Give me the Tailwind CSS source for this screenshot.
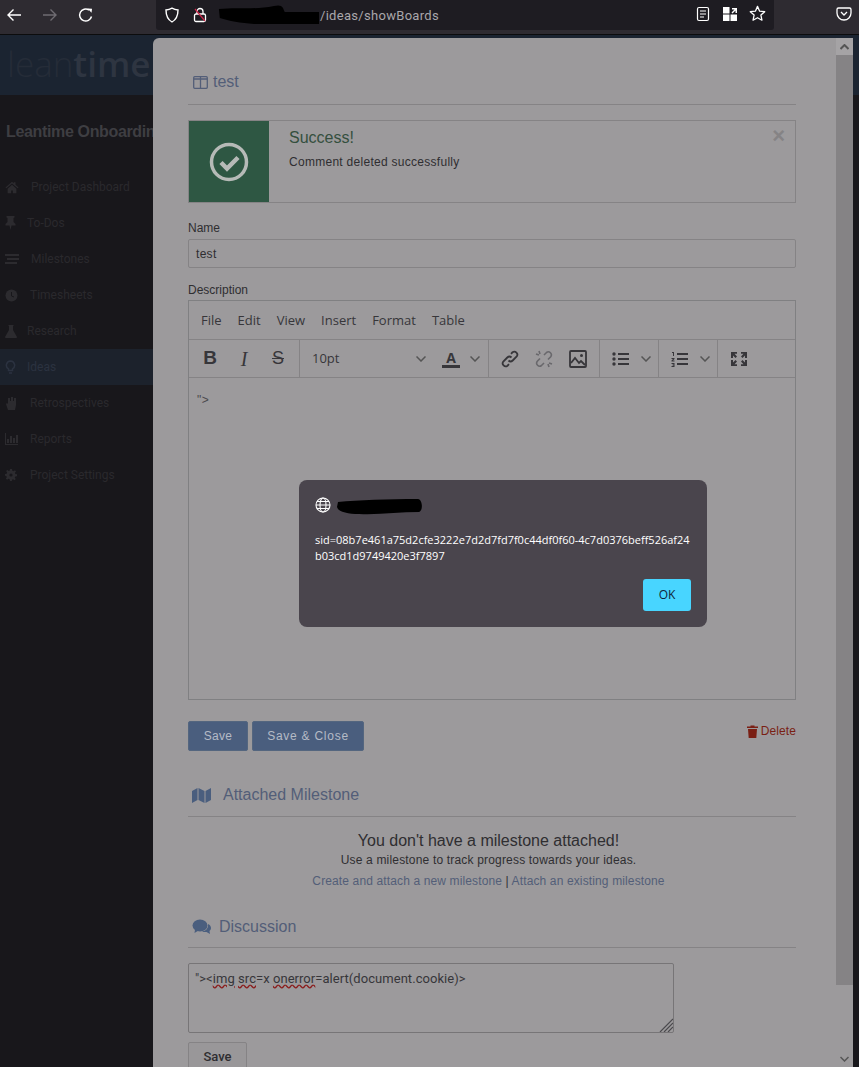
<!DOCTYPE html>
<html lang="en">
<head>
    <meta charset="UTF-8">
    <title>Leantime - Ideas</title>
    <script src="https://cdn.jsdelivr.net/npm/@tailwindcss/browser@4"></script>
</head>
<body class="relative w-[859px] h-[1067px] overflow-hidden bg-[#18171b] font-['Liberation_Sans',sans-serif]">

    <!-- Browser toolbar -->
    <div class="relative flex h-[35px] bg-[#2e2b31] border-b border-[#0c0c0d]">
        <div class="flex items-center w-[156px] h-[30px] text-white">
            <svg class="ml-[6px] w-4 h-4" viewBox="0 0 16 16" fill="none" stroke="currentColor" stroke-width="1.4"><path d="M15 8H2M7.5 2.5 2 8l5.500 5.500"/></svg>
            <svg class="ml-[20px] w-4 h-4 text-[#6f6c72]" viewBox="0 0 16 16" fill="none" stroke="currentColor" stroke-width="1.4"><path d="M1 8h13M8.500 2.500 14 8l-5.500 5.500"/></svg>
            <svg class="ml-[20px] w-4 h-4" viewBox="0 0 16 16" fill="none" stroke="currentColor" stroke-width="1.5"><path d="M13.500 9.500A6 6 0 1 1 11 3"/><path d="M9.500 1.500 14 1.800l-.5 4z" fill="currentColor" stroke="none"/></svg>
        </div>
        <div class="relative flex items-center w-[618px] h-[30px] bg-[#1e1c22] rounded-b-[3px]">
            <svg class="ml-[8px] w-4 h-4 text-white" viewBox="0 0 16 16" fill="none" stroke="currentColor" stroke-width="1.4"><path d="M8 1.200c2 1.200 4 1.700 6 1.800 0 6-1.500 9.500-6 12-4.500-2.500-6-6-6-12 2-.1 4-.6 6-1.800z"/></svg>
            <svg class="ml-[12px] w-4 h-4" viewBox="0 0 16 16" fill="none"><rect x="2.500" y="7" width="11" height="7.500" rx="1.500" stroke="#fff" stroke-width="1.300"/><path d="M5 7V4.500a3 3 0 0 1 6 0V7" stroke="#fff" stroke-width="1.300"/><path d="M3 2l10 12" stroke="#c9264a" stroke-width="1.200"/></svg>
            <span class="ml-[112px] pt-[1px] text-[13px] tracking-[0.3px] text-[#a9a7ab] font-['Roboto',sans-serif]">/ideas/showBoards</span>
            <svg class="absolute left-[62px] top-[1px] w-[101px] h-[24px]" viewBox="0 0 112 24" preserveAspectRatio="none"><path d="M1 8C20 6 40 9 62 5c10-2 10 2 12 6h38v12H40C25 22 12 20 2 17z" fill="#000"/></svg>
            <svg class="absolute left-[539px] top-[6px] w-4 h-4 text-white" viewBox="0 0 16 16" fill="none" stroke="currentColor" stroke-width="1.200"><rect x="2.500" y="1.500" width="11" height="13" rx="1.500"/><path d="M5 5h6M5 8h6M5 11h4"/></svg>
            <svg class="absolute left-[566px] top-[6px] w-4 h-4" viewBox="0 0 16 16" fill="#fff"><rect x="1" y="1" width="6.500" height="6.500"/><rect x="1" y="8.500" width="6.500" height="6.500"/><rect x="8.500" y="8.500" width="6.500" height="6.500"/><path d="M10 2h5v5h-1.500V4.500L10.500 7.500 9.500 6.500 12.500 3.500H10z"/></svg>
            <svg class="absolute left-[593px] top-[5px] w-[17px] h-[17px] text-white" viewBox="0 0 16 16" fill="none" stroke="currentColor" stroke-width="1.200"><path d="M8 1.300l2 4.500 4.800.5-3.600 3.200 1 4.800L8 12l-4.200 2.300 1-4.800L1.200 6.300 6 5.800z" stroke-linejoin="round"/></svg>
        </div>
        <svg class="ml-[62px] mt-[6px] w-4 h-4 text-white" viewBox="0 0 16 16" fill="none" stroke="currentColor" stroke-width="1.300"><path d="M2.500 2h11A1.500 1.500 0 0 1 15 3.500V7a7 7 0 0 1-14 0V3.500A1.500 1.500 0 0 1 2.500 2z"/><path d="M5 6l3 3 3-3"/></svg>
    </div>

    <!-- Dimmed app behind the modal -->
    <div class="h-[60px] bg-[#1b2431] overflow-hidden">
        <div class="pl-[7px] pt-[7px] text-[35px] leading-[44px] font-['Open_Sans',sans-serif] whitespace-nowrap"><span class="font-light text-[#252c38]">lean</span><span class="font-semibold text-[#2e3541]">time</span></div>
    </div>
    <div class="w-[153px] overflow-hidden">
        <div class="pl-[6px] pt-[27px] h-[74px] text-[16px] leading-[19px] font-bold tracking-[-0.35px] text-[#3e3e42] whitespace-nowrap">Leantime Onboarding</div>
        <nav class="text-[12px] text-[#2a292d] font-['Roboto',sans-serif]">
            <div class="flex items-center h-[36px] pl-[5px]"><svg class="w-[14px] h-[14px] text-[#2c2b2f]" viewBox="0 0 16 16" fill="currentColor"><path d="M8 2 .5 8.500l1 1L8 4l6.500 5.500 1-1L12 5.500V2.500h-2v1.300zM3 10v5h4v-3h2v3h4v-5L8 5.500z"/></svg><span class="ml-[12px]">Project Dashboard</span></div>
            <div class="flex items-center h-[36px] pl-[5px]"><svg class="w-[11px] h-[14px] text-[#2c2b2f]" viewBox="0 0 11 14" fill="currentColor"><path d="M1.500 0h8v1.500L8.500 2v4l2 2v1.500H6.500L5.500 14l-1-4.500H.5V8l2-2V2l-1-.5z"/></svg><span class="ml-[11px]">To-Dos</span></div>
            <div class="flex items-center h-[36px] pl-[5px]"><svg class="w-[14px] h-[12px] text-[#2c2b2f]" viewBox="0 0 14 12" fill="currentColor"><path d="M0 1h14v2H0zM2 5h12v2H2zM0 9h12v2H0z"/></svg><span class="ml-[12px]">Milestones</span></div>
            <div class="flex items-center h-[36px] pl-[5px]"><svg class="w-[13px] h-[13px] text-[#2c2b2f]" viewBox="0 0 13 13"><circle cx="6.500" cy="6.500" r="6" fill="currentColor"/><path d="M6.500 3v4l2.500 1" stroke="#18171b" fill="none"/></svg><span class="ml-[12px]">Timesheets</span></div>
            <div class="flex items-center h-[36px] pl-[5px]"><svg class="w-[12px] h-[13px] text-[#2c2b2f]" viewBox="0 0 12 13" fill="currentColor"><path d="M3.500 0h5v1H8v4l4 7-.5 1H.5L0 12l4-7V1h-.5z"/></svg><span class="ml-[10px]">Research</span></div>
            <div class="flex items-center h-[36px] pl-[5px] bg-[#1c222c] text-[#2b3240]"><svg class="w-[11px] h-[14px] text-[#2b3240]" viewBox="0 0 11 14" fill="none" stroke="currentColor" stroke-width="1.500"><path d="M5.500 1A4.300 4.300 0 0 1 7.500 9v1.500h-4V9A4.300 4.300 0 0 1 5.500 1zM4 13h3"/></svg><span class="ml-[11px]">Ideas</span></div>
            <div class="flex items-center h-[36px] pl-[5px]"><svg class="w-[13px] h-[13px] text-[#2c2b2f]" viewBox="0 0 13 13" fill="currentColor"><path d="M3 1h2v3h1V0h2v4h1V1h2v7l-1 5H3L1 7l1-1 1 1z"/></svg><span class="ml-[12px]">Retrospectives</span></div>
            <div class="flex items-center h-[36px] pl-[5px]"><svg class="w-[13px] h-[12px] text-[#2c2b2f]" viewBox="0 0 13 12" fill="currentColor"><path d="M0 0h1v11h12v1H0zM2 6h2v4H2zM5 3h2v7H5zM8 5h2v5H8zM11 2h2v8h-2z"/></svg><span class="ml-[12px]">Reports</span></div>
            <div class="flex items-center h-[36px] pl-[5px]"><svg class="w-[12px] h-[12px] text-[#2c2b2f]" viewBox="0 0 12 12" fill="currentColor"><path d="M5 0h2l.3 1.700 1.300.5L10 1.200 11 2.500 9.900 3.800l.4 1.300L12 5.300v1.900l-1.700.3-.5 1.200 1 1.400-1.300 1.200-1.400-1-1.200.5L7 12H5l-.3-1.700-1.200-.5-1.400 1L.8 9.600l1-1.400-.5-1.200L0 6.800V5l1.700-.3.4-1.200-1-1.400L2.400.9l1.400 1 1-.4z"/><circle cx="6" cy="6" r="1.600" fill="#18171b"/></svg><span class="ml-[13px]">Project Settings</span></div>
        </nav>
    </div>

    <!-- Modal window -->
    <div class="absolute left-[153px] top-[38px] flex w-[700px] h-[1029px] bg-[#9c9a9c] rounded-tl-[6px] overflow-hidden">
        <div class="w-[683px] pl-[35px] pr-[40px] pt-[34px] text-[12px] text-[#2f2e31]">

            <div class="flex items-center h-[20px] text-[16px] text-[#535e78]">
                <svg class="ml-[5px] mr-[5px] w-[15px] h-[13px]" viewBox="0 0 15 13" fill="none" stroke="currentColor" stroke-width="1.300"><rect x=".7" y=".7" width="13.600" height="11.600" rx="1"/><path d="M7.500 1v11M1 3h13" /></svg>test
            </div>
            <div class="mt-[12px] border-t border-[#858385]"></div>

            <!-- Success notice -->
            <div class="relative flex mt-[15px] h-[83px] border border-[#858385]">
                <div class="flex items-center justify-center w-[80px] bg-[#2e5743]">
                    <svg class="w-[40px] h-[40px]" viewBox="0 0 40 40" fill="none" stroke="#b6bab7"><circle cx="20" cy="20" r="17.500" stroke-width="3.500"/><path d="M12 20.500l6 6 11-11" stroke-width="4.500"/></svg>
                </div>
                <div class="pl-[20px] pt-[8px]">
                    <div class="text-[16px] leading-[18px] text-[#344f3e]">Success!</div>
                    <div class="mt-[7px] leading-[16px] tracking-[0.28px]">Comment deleted successfully</div>
                </div>
                <span class="absolute right-[10px] top-[4px] text-[22px] leading-[22px] font-bold text-[#858385]">×</span>
            </div>

            <div class="mt-[17px] leading-[16px]">Name</div>
            <div class="mt-[3px] flex items-center h-[29px] px-[7px] border border-[#858385] rounded-[2px] tracking-[0.3px]">test</div>

            <div class="mt-[14px] leading-[16px]">Description</div>

            <!-- Rich text editor -->
            <div class="mt-[2px] h-[400px] border border-[#808082] font-['Open_Sans',sans-serif] text-[#37363a]">
                <div class="flex items-center gap-[16px] h-[38px] pl-[12px] pt-[1px] text-[13px]">
                    <span>File</span><span>Edit</span><span>View</span><span>Insert</span><span>Format</span><span>Table</span>
                </div>
                <div class="flex h-[39px] border-y border-[#858385]">
                    <div class="flex items-center w-[111px] pl-[4px] border-r border-[#858385]">
                        <span class="w-[34px] text-center text-[19px] font-bold font-['Liberation_Sans',sans-serif]">B</span>
                        <span class="w-[34px] text-center text-[20px] italic font-['Liberation_Serif',serif]">I</span>
                        <span class="w-[34px] text-center text-[18px] line-through font-['Liberation_Sans',sans-serif]">S</span>
                    </div>
                    <div class="flex items-center w-[189px] border-r border-[#858385]">
                        <span class="ml-[12px] pt-[1px] w-[104px] text-[13px]">10pt</span>
                        <svg class="w-[10px] h-[6px]" viewBox="0 0 10 6" fill="none" stroke="#555" stroke-width="1.500"><path d="M.5.500 5 5 9.500.500"/></svg>
                        <span class="ml-[16px] w-[18px] text-center text-[14px] leading-[15px] font-bold border-b-[3px] border-[#37363a]">A</span>
                        <svg class="ml-[10px] w-[10px] h-[6px]" viewBox="0 0 10 6" fill="none" stroke="#555" stroke-width="1.500"><path d="M.5.500 5 5 9.500.500"/></svg>
                    </div>
                    <div class="flex items-center w-[111px] pl-[12px] gap-[16px] border-r border-[#858385]">
                        <svg class="w-[18px] h-[18px]" viewBox="0 0 18 18" fill="none" stroke="#37363a" stroke-width="1.800"><path d="M7.500 10.500a3 3 0 0 0 4.200 0l4-4a3 3 0 0 0-4.200-4.200L10 3.800"/><path d="M10.500 7.500a3 3 0 0 0-4.200 0l-4 4a3 3 0 0 0 4.200 4.200L8 14.200"/></svg>
                        <svg class="w-[18px] h-[18px]" viewBox="0 0 18 18" fill="none" stroke="#69686c" stroke-width="1.600"><path d="M9 5l2.500-2.500a3 3 0 0 1 4.200 4.200L13 9.500M9 13l-2.500 2.500a3 3 0 0 1-4.200-4.200L5 8.500M4 1l1 3M1 4l3 1M14 17l-1-3M17 14l-3-1"/></svg>
                        <svg class="w-[18px] h-[18px]" viewBox="0 0 18 18" fill="none" stroke="#37363a" stroke-width="1.800"><rect x="1" y="1" width="16" height="16" rx="1"/><circle cx="12.500" cy="5.500" r="1.500" fill="#37363a" stroke="none"/><path d="M2 13l4-5 4 5 2-2 4 4"/></svg>
                    </div>
                    <div class="flex items-center w-[59px] pl-[12px] border-r border-[#858385]">
                        <svg class="w-[17px] h-[14px]" viewBox="0 0 17 14" fill="#37363a"><circle cx="2" cy="2" r="1.700"/><circle cx="2" cy="7" r="1.700"/><circle cx="2" cy="12" r="1.700"/><path d="M6 1h11v2H6zM6 6h11v2H6zM6 11h11v2H6z"/></svg>
                        <svg class="ml-[12px] w-[10px] h-[6px]" viewBox="0 0 10 6" fill="none" stroke="#555" stroke-width="1.500"><path d="M.5.500 5 5 9.500.500"/></svg>
                    </div>
                    <div class="flex items-center w-[59px] pl-[12px] border-r border-[#858385]">
                        <svg class="w-[17px] h-[16px]" viewBox="0 0 17 16" fill="#37363a"><path d="M6 2h11v2H6zM6 7h11v2H6zM6 12h11v2H6zM1 1h2v4H2V2H1zM.5 7h3v1L2 9.500h1.500v1H.5v-1L2 8H.5zM.5 12h3v4h-3v-1h2v-.5h-1v-1h1V13h-2z"/></svg>
                        <svg class="ml-[12px] w-[10px] h-[6px]" viewBox="0 0 10 6" fill="none" stroke="#555" stroke-width="1.500"><path d="M.5.500 5 5 9.500.500"/></svg>
                    </div>
                    <div class="flex items-center pl-[13px]">
                        <svg class="w-[16px] h-[14px]" viewBox="0 0 16 14" fill="#37363a"><path d="M0 0h6v1.800H3.500L6 4.500 4.500 6 2 3.500V6H0zM10 0h6v6h-2V3.500L11.500 6 10 4.500l2.500-2.700H10zM0 8h2v2.500L4.500 8 6 9.500l-2.500 2.700H6V14H0zM14 8h2v6h-6v-1.800h2.500L10 9.500 11.500 8l2.500 2.500z"/></svg>
                    </div>
                </div>
                <div class="pl-[8px] pt-[14px] text-[12px] leading-[16px] tracking-[0.5px] font-['Liberation_Sans',sans-serif] text-[#4a494d]">"&gt;</div>
            </div>

            <!-- Form actions -->
            <div class="mt-[21px] flex items-start h-[30px]">
                <button class="h-[30px] w-[60px] bg-[#4a5e7e] border border-[#54667f] rounded-[2px] text-[#b5bbc6] tracking-[0.3px]">Save</button>
                <button class="ml-[4px] h-[30px] w-[112px] bg-[#4a5e7e] border border-[#54667f] rounded-[2px] text-[#b5bbc6] tracking-[0.75px]">Save &amp; Close</button>
                <span class="ml-auto mt-[3px] flex items-center leading-[14px] tracking-[0.1px] text-[#7a1f14]">
                    <svg class="mr-[3px] w-[11px] h-[13px]" viewBox="0 0 11 13" fill="currentColor"><path d="M0 1.500h3.500V.5h4v1H11v1.500H0zM1 4h9l-.7 9H1.700z"/></svg>Delete
                </span>
            </div>

            <!-- Attached milestone -->
            <div class="mt-[34px] flex items-center h-[20px] text-[16px] text-[#535e78]">
                <svg class="ml-[4px] w-[19px] h-[15px] text-[#4a5e7e]" viewBox="0 0 19 15" fill="currentColor"><path d="M0 3l5.500-3v12L0 15zM6.500 0l6 3v12l-6-3zM13.500 3 19 0v12l-5.500 3z"/></svg>
                <span class="ml-[12px]">Attached Milestone</span>
            </div>
            <div class="mt-[11px] border-t border-[#858385]"></div>
            <div class="text-center pr-[7px]">
                <div class="mt-[15px] text-[16px] leading-[18px]">You don't have a milestone attached!</div>
                <div class="mt-[2px] leading-[16px] tracking-[0.18px]">Use a milestone to track progress towards your ideas.</div>
                <div class="mt-[5px] leading-[16px] tracking-[0.13px] text-[#535e78]">Create and attach a new milestone <span class="text-[#2f2e31]">|</span> Attach an existing milestone</div>
            </div>

            <!-- Discussion -->
            <div class="mt-[28px] flex items-center h-[20px] text-[16px] text-[#535e78]">
                <svg class="ml-[4px] w-[19px] h-[16px] text-[#4a5e7e]" viewBox="0 0 19 16" fill="currentColor"><ellipse cx="8" cy="6.500" rx="7.500" ry="6"/><path d="M3 10.500 2.500 14l4-2.500zM16 5c2 1 3 2.500 3 4 0 1.500-1 2.500-1.500 3l.5 3-3.500-2c-1.500.2-3 0-4.500-.8 4 0 6.500-3 6-7.200z"/></svg>
                <span class="ml-[8px]">Discussion</span>
            </div>
            <div class="mt-[10px] border-t border-[#858385]"></div>
            <div class="relative mt-[15px] w-[486px] h-[70px] border border-[#777577] rounded-[2px] pl-[6px] pt-[7px] font-['Roboto',sans-serif] text-[13px] leading-[16px] tracking-[0.05px] text-[#37363a]">
                "&gt;&lt;<span class="underline decoration-wavy decoration-[#8a1c1c]">img</span> <span class="underline decoration-wavy decoration-[#8a1c1c]">src</span>=x <span class="underline decoration-wavy decoration-[#8a1c1c]">onerror</span>=alert(document.cookie)&gt;
                <svg class="absolute right-0 bottom-0 w-[14px] h-[14px]" viewBox="0 0 14 14" stroke="#4a494d" stroke-width="1.200"><path d="M1 14 14 1M5 14l9-9M9 14l5-5"/></svg>
            </div>
            <button class="mt-[9px] w-[59px] h-[30px] bg-[#999799] border border-[#858385] rounded-[2px] text-[13px] text-[#2f2e31] font-['Roboto',sans-serif] font-medium">Save</button>
        </div>

        <!-- Scrollbar -->
        <div class="flex flex-col w-[17px] bg-[#9c9a9c]">
            <div class="flex items-center justify-center h-[17px] bg-[#a5a3a5]">
                <svg class="w-[9px] h-[6px]" viewBox="0 0 9 6" fill="none" stroke="#555" stroke-width="2"><path d="M.5 5 4.500 1l4 4"/></svg>
            </div>
            <div class="h-[930px] bg-[#858385]"></div>
            <div class="flex-1"></div>
            <div class="flex items-center justify-center h-[17px]">
                <svg class="w-[9px] h-[6px]" viewBox="0 0 9 6" fill="none" stroke="#555" stroke-width="1.500"><path d="M.5 1 4.500 5l4-4"/></svg>
            </div>
        </div>
    </div>

    <!-- Browser alert dialog -->
    <div class="absolute left-[299px] top-[480px] w-[408px] h-[147px] bg-[#4a454d] rounded-[8px] pl-[16px] pr-[17px] pt-[17px] text-white font-['Open_Sans',sans-serif]">
        <svg class="w-[16px] h-[16px]" viewBox="0 0 16 16" fill="none" stroke="#fff" stroke-width="1.100"><circle cx="8" cy="8" r="7"/><ellipse cx="8" cy="8" rx="3" ry="7"/><path d="M1 8h14M2 4.500h12M2 11.500h12"/></svg>
        <svg class="absolute left-[37px] top-[17px] w-[88px] h-[19px]" viewBox="0 0 88 19"><path d="M2 5c20-2 50-3 80-3 5 1 5 12 1 13-20 0-40 3-60 2C12 17 2 15 1 10z" fill="#000"/></svg>
        <p class="mt-[19px] text-[11px] leading-[16px] whitespace-nowrap">sid=08b7e461a75d2cfe3222e7d2d7fd7f0c44df0f60-4c7d0376beff526af24<br>b03cd1d9749420e3f7897</p>
        <button class="absolute right-[16px] bottom-[16px] w-[48px] h-[32px] bg-[#48d5ff] rounded-[3px] text-[12px] text-[#10263a]">OK</button>
    </div>

</body>
</html>
